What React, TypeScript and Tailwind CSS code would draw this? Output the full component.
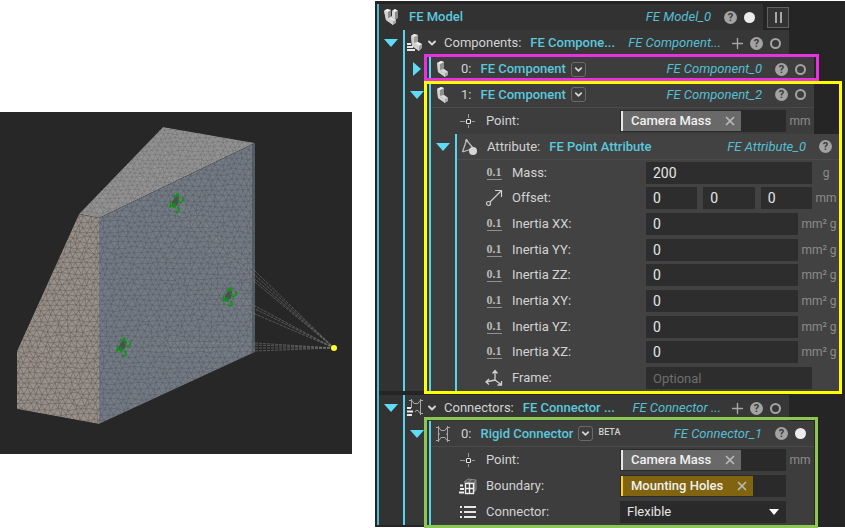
import type { ReactNode } from "react";
import { ChevronDown, Plus, X } from "lucide-react";

type Face = { id: string; points: string; fill: string; line: string; step: number; seed: number };

const faces: Face[] = [
  { id: "top", points: "163,15 255,31 99,106 79,102", fill: "#949494", line: "#767676", step: 5, seed: 3 },
  { id: "side", points: "79,102 99,106 99,312 17,297 17,239", fill: "#989089", line: "#68625c", step: 6, seed: 11 },
  { id: "front", points: "99,106 255,31 255,240 99,312", fill: "#747b84", line: "#596068", step: 6, seed: 29 },
];

const holes = [
  [176, 91],
  [229, 185],
  [123, 235],
];

// jittered triangle lattice, the same every time for a given seed
const meshPath = (step: number, seed: number) => {
  const noise = (i: number, j: number) => {
    const n = Math.sin(i * 127.1 + j * 311.7 + seed * 74.7) * 43758.5453;
    return n - Math.floor(n) - 0.5;
  };
  const at = (i: number, j: number) => {
    const x = (i + (j % 2) / 2) * step + noise(i, j) * step * 0.5;
    const y = j * step * 0.87 + noise(j + 50, i) * step * 0.5;
    return `${x.toFixed(1)} ${y.toFixed(1)}`;
  };
  let d = "";
  for (let j = 0; j < 320 / (step * 0.87); j++) {
    for (let i = 0; i < 260 / step; i++) {
      const k = j % 2;
      d += `M${at(i + 1, j)}L${at(i, j)}L${at(i + k, j + 1)}M${at(i, j)}L${at(i + k - 1, j + 1)}`;
    }
  }
  return d;
};

const Viewport = () => (
  <svg viewBox="0 0 352 342" className="block w-full bg-[#272727]" role="img" aria-label="Meshed bracket">
    <defs>
      {faces.map((f) => (
        <clipPath id={f.id} key={f.id}>
          <polygon points={f.points} />
        </clipPath>
      ))}
    </defs>
    {faces.map((f) => (
      <g key={f.id} clipPath={`url(#${f.id})`}>
        <polygon points={f.points} fill={f.fill} />
        <path d={meshPath(f.step, f.seed)} fill="none" stroke={f.line} strokeWidth="0.6" />
      </g>
    ))}
    <path d="M252 33L255 31V240L252 242Z" fill="#4a535d" opacity="0.7" />
    <g stroke="#a0a0a0" strokeWidth="0.5" strokeDasharray="3 1" opacity="0.8">
      <path d="M334 236L255 159M334 236L255 163M334 236L255 167M334 236L255 170" />
      <path d="M334 236L255 194M334 236L255 197M334 236L255 202" />
      <path d="M334 236L255 231M334 236L255 233M334 236L255 236M334 236L255 239" />
    </g>
    <g stroke="#a0a89c" strokeWidth="0.6" strokeDasharray="2 2" opacity="0.6">
      <path d="M255 159L180 88M255 163L180 94M255 169L176 99" />
      <path d="M255 194L234 184M255 202L230 192M255 232L128 230M255 238L126 238" />
    </g>
    {holes.map(([x, y]) => (
      <g key={x} transform={`translate(${x} ${y})`} fill="none">
        <ellipse cx="-1" cy="-1" rx="3" ry="6" fill="#4a504e" transform="rotate(25)" />
        <path
          d="M1 -10Q3 -7 1 -5M1 -8L-3 -6M2 -4Q3 1 6 -1Q9 -4 6 -6M-7 4L0 2M-5 -2L-6 5M-2 0V5M1 4Q4 5 3 8Q1 10 -2 8"
          stroke="#0a9614"
          strokeWidth="1.500"
        />
      </g>
    ))}
    <circle cx="334" cy="236" r="3" fill="#ffff2e" />
  </svg>
);

const BlockIcon = () => (
  <svg width="14" height="18" viewBox="0 0 14 18" aria-hidden="true">
    <path d="M1 3L5 1L8 2V9L12 12V15L9 17L2 12Z" fill="#a8a8a8" />
    <path d="M1 3L4 4V10L9 13V17L2 12Z" fill="#cfcfcf" />
    <path d="M4 4L8 2V9L4 10Z" fill="#8f8f8f" />
    <path d="M4 10L8 9L12 12L9 13Z" fill="#dadada" />
    <path d="M1 3L5 1L8 2L4 4Z" fill="#f2f2f2" />
  </svg>
);

const ModelIcon = () => (
  <svg width="16" height="18" viewBox="0 0 16 18" aria-hidden="true">
    <path d="M1 3L4 1L8 2V8L9 8V3L12 1L15 3V10L13 11V15L10 17L3 12Z" fill="#a5a5a5" />
    <path d="M1 3L5 4V10L10 13V17L3 12Z" fill="#d2d2d2" />
    <path d="M1 3L4 1L8 2L5 4ZM9 3L12 1L15 3L12 4Z" fill="#f6f6f6" />
    <path d="M9 3L12 4V11L9 9Z" fill="#d8d8d8" />
    <path d="M5 10L8 9L13 12L10 13Z" fill="#e8e8e8" />
    <path d="M8 2V9L5 10V4ZM15 3V10L12 11V4Z" fill="#8a8a8a" />
  </svg>
);

const BlockListIcon = () => (
  <svg width="17" height="18" viewBox="0 0 17 18" aria-hidden="true">
    <path d="M4 2L7 0L11 1V8L15 10V14L12 17L5 12Z" fill="#9c9c9c" />
    <path d="M4 2L7 3V9L12 12V17L5 12Z" fill="#cfcfcf" />
    <path d="M7 9L11 8L15 10L12 12ZM4 2L7 0L11 1L7 3Z" fill="#ececec" />
    <path d="M0 10H4M0 13H6M0 16H8" stroke="#e6e6e6" strokeWidth="2" />
  </svg>
);

const ConnectorIcon = () => (
  <svg width="14" height="16" viewBox="0 0 14 16" fill="none" stroke="#a8a8a8" aria-hidden="true">
    <path d="M2.500 0V16M11.500 0V16" />
    <path d="M0 1.500H3L5 4.500H9L11 1.500H14M0 14.500H3L5 11.500H9L11 14.500H14" />
    <path d="M2 8H4M10 8H12" />
  </svg>
);

const ConnectorListIcon = () => (
  <svg width="17" height="18" viewBox="0 0 17 18" fill="none" stroke="#a8a8a8" aria-hidden="true">
    <path d="M4.500 0V9M13.500 0V16" />
    <path d="M2 1.500H5L7 4.500H11L13 1.500H16M8 13L9 11.500H11L13 14.500H16" />
    <path d="M0 9H4M0 12.500H6M0 16H5" stroke="#e8e8e8" strokeWidth="2" />
  </svg>
);

const PointIcon = () => (
  <svg width="16" height="16" viewBox="0 0 16 16" fill="none" stroke="#b0b0b0" aria-hidden="true">
    <path d="M0 8.500H5M12 8.500H15M8.500 1V5M8.500 12V15" strokeWidth="0.800" />
    <rect x="6.500" y="6.500" width="4" height="4" rx="1" fill="#222" strokeWidth="1.200" stroke="#e8e8e8" />
  </svg>
);

const AttributeIcon = () => (
  <svg width="17" height="18" viewBox="0 0 17 18" fill="none" stroke="#bdbdbd" aria-hidden="true">
    <path d="M1.500 14L5.500 2L12 10M1.500 14L9 11.500" strokeWidth="1.300" />
    <circle cx="5.500" cy="2.500" r="1" />
    <circle cx="12" cy="13" r="4" fill="#d6d6d6" stroke="none" />
  </svg>
);

const NumberIcon = () => (
  <span
    aria-hidden="true"
    className="w-[15px] border-b border-[#909090] text-center font-['Liberation_Serif',serif] text-[12px] leading-[13px] font-bold text-[#b8b8b8]"
  >
    0.1
  </span>
);

const OffsetIcon = () => (
  <svg width="17" height="18" viewBox="0 0 17 18" fill="none" stroke="#cfcfcf" strokeWidth="1.200" aria-hidden="true">
    <circle cx="2.500" cy="14.500" r="2" />
    <path d="M4 13L15.500 1.500M9 1.500H15.500V8" />
  </svg>
);

const FrameIcon = () => (
  <svg width="18" height="18" viewBox="0 0 18 18" fill="none" stroke="#d0d0d0" strokeWidth="1.300" aria-hidden="true">
    <path d="M10 11V2M7.500 4.500L10 1.500L12.500 4.500M10 11L1 13M4 10L1 13L4 15.500M10 11L16 15.500M16.500 12V16H12.500" />
  </svg>
);

const BoundaryIcon = () => (
  <svg width="18" height="17" viewBox="0 0 18 17" aria-hidden="true">
    <path d="M5 4L9 1L17 2V12L14 15V5Z" fill="#555" stroke="#999" strokeWidth="0.800" />
    <path d="M9 4L13 1.500M15.500 3V13" stroke="#999" strokeWidth="0.800" />
    <rect x="6.500" y="5.500" width="8" height="10" fill="#3a3a3a" stroke="#eee" strokeWidth="1.400" />
    <path d="M10.500 5V16M6 10.500H15" stroke="#eee" strokeWidth="1.400" />
    <path d="M1 7.500H4M1 11H5M0 14.500H5" stroke="#eee" strokeWidth="2" />
  </svg>
);

const ListIcon = () => (
  <svg width="16" height="14" viewBox="0 0 16 14" stroke="#e6e6e6" strokeWidth="2" aria-hidden="true">
    <path d="M0 2H2M4 2H16M0 7H2M4 7H16M0 12H2M4 12H16" />
  </svg>
);

const Toggle = ({ open = true, label }: { open?: boolean; label: string }) => (
  <button aria-label={label} aria-expanded={open} className="flex h-[26px] w-6 items-center justify-center">
    {open ? (
      <svg width="14" height="8" viewBox="0 0 14 8" fill="#5fdcf5">
        <path d="M0 0H14L7 8Z" />
      </svg>
    ) : (
      <svg width="8" height="14" viewBox="0 0 8 14" fill="#5fdcf5">
        <path d="M0 0V14L8 7Z" />
      </svg>
    )}
  </button>
);

type HeaderProps = {
  icon: ReactNode;
  label?: string;
  name: string;
  id: string;
  list?: boolean;
  menu?: boolean;
  beta?: boolean;
  dot?: "full" | "ring";
  className?: string;
};

const Header = ({ icon, label, name, id, list, menu, beta, dot, className = "" }: HeaderProps) => (
  <div className={`flex h-[26px] items-center pr-2 whitespace-nowrap ${className}`}>
    {list ? (
      <>
        <span className="flex w-5 shrink-0 justify-center">{icon}</span>
        <ChevronDown size={12} strokeWidth={4} className="mr-[6px] ml-px shrink-0" aria-hidden="true" />
      </>
    ) : (
      <span className="mr-[6px] flex w-6 shrink-0 justify-center">{icon}</span>
    )}
    {label && <span className="mr-[9px]">{label}</span>}
    <span className="font-medium text-[#5ac8dd]">{name}</span>
    {menu && (
      <button
        aria-label={`${name} type`}
        className="ml-[5px] flex size-[15px] shrink-0 items-center justify-center rounded-[3px] border border-[#6a6a6a]"
      >
        <ChevronDown size={11} strokeWidth={4} />
      </button>
    )}
    {beta && <span className="mb-1 ml-[5px] text-[9px] font-medium">BETA</span>}
    <span className="ml-auto pl-2 text-[#55bfd3] italic">{id}</span>
    {list && (
      <button aria-label={`Add to ${id}`} className="ml-2 shrink-0 text-[#a5a5a5]">
        <Plus size={17} strokeWidth={2} />
      </button>
    )}
    <button
      aria-label={`Help for ${id}`}
      className={`flex size-[13px] shrink-0 items-center justify-center rounded-full bg-[#a3a3a3] text-[11px] leading-none font-bold text-[#3a3a3a] ${list ? "ml-1" : "ml-[13px]"}`}
    >
      ?
    </button>
    {dot && (
      <button
        aria-label={`Show ${id}`}
        className={`ml-[7px] size-[11px] shrink-0 rounded-full ${dot === "full" ? "bg-[#ececec]" : "border-2 border-[#a3a3a3]"}`}
      />
    )}
  </div>
);

type RowProps = {
  icon: ReactNode;
  label: string;
  htmlFor: string;
  unit?: ReactNode;
  wide?: boolean;
  children: ReactNode;
};

const Row = ({ icon, label, htmlFor, unit, wide, children }: RowProps) => (
  <div className="flex min-h-[25px] items-center">
    <label htmlFor={htmlFor} className="flex w-[189px] shrink-0 items-center pl-[25px]">
      <span className="mr-[6px] flex w-6 justify-center">{icon}</span>
      {label}
    </label>
    <div className="flex min-w-0 flex-1 gap-[6px]">{children}</div>
    <span className={`shrink-0 text-center text-[12px] whitespace-nowrap text-[#8c8c8c] ${wide ? "w-[42px]" : "w-7"}`}>
      {unit}
    </span>
  </div>
);

const Field = ({ id, value, label }: { id: string; value: string; label?: string }) => (
  <input
    id={id}
    aria-label={label}
    defaultValue={value}
    placeholder="Optional"
    className="h-[22px] w-full min-w-0 bg-[#2d2d2d] px-[7px] text-[14px] text-[#e6e6e6] outline-none placeholder:text-[13px] placeholder:text-[#6e6e6e]"
  />
);

const Chip = ({ id, text, gold }: { id: string; text: string; gold?: boolean }) => (
  <div className="flex h-[22px] w-full items-center bg-[#2a2a2a] pl-px">
    <span
      className={`flex h-5 shrink-0 items-center border-l-2 pr-1 pl-2 font-medium text-[#f0f0f0] ${gold ? "border-[#ffd02e] bg-[#80640f]" : "border-[#e8e8e8] bg-[#696969]"}`}
    >
      {text}
      <button aria-label={`Remove ${text}`} className="ml-3 text-[#b8b8b8]">
        <X size={14} strokeWidth={3} />
      </button>
    </span>
    <input id={id} className="w-full min-w-0 bg-transparent outline-none" />
  </div>
);

const Outline = ({ className }: { className: string }) => (
  <div className={`pointer-events-none absolute z-10 border-3 ${className}`} />
);

const inertias = ["XX", "YY", "ZZ", "XY", "YZ", "XZ"];

const Attribute = () => (
  <div className="flex bg-[#3d3d3d]">
    <Toggle label="Point attribute" />
    <section className="min-w-0 flex-1 border-l-2 border-[#5ad4ec] bg-[#424242]">
      <Header
        className="border-b border-[#4c4c4c]"
        icon={<AttributeIcon />}
        label="Attribute:"
        name="FE Point Attribute"
        id="FE Attribute_0"
      />
      <div className="grid h-[231px] auto-rows-fr">
        <Row icon={<NumberIcon />} label="Mass:" htmlFor="mass" unit="g">
          <Field id="mass" value="200" />
        </Row>
        <Row icon={<OffsetIcon />} label="Offset:" htmlFor="offset-x" unit="mm">
          <Field id="offset-x" value="0" />
          <Field id="offset-y" value="0" label="Offset Y" />
          <Field id="offset-z" value="0" label="Offset Z" />
        </Row>
        {inertias.map((axis) => (
          <Row
            key={axis}
            icon={<NumberIcon />}
            label={`Inertia ${axis}:`}
            htmlFor={`inertia-${axis}`}
            unit="mm² g"
            wide
          >
            <Field id={`inertia-${axis}`} value="0" />
          </Row>
        ))}
        <Row icon={<FrameIcon />} label="Frame:" htmlFor="frame">
          <Field id="frame" value="" />
        </Row>
      </div>
    </section>
  </div>
);

const Components = () => (
  <div className="flex">
    <div className="bg-[#323232]">
      <Toggle label="Components" />
    </div>
    <section className="min-w-0 flex-1 border-l-2 border-[#5ad4ec]">
      <Header
        className="mr-14 bg-[#373737]"
        list
        icon={<BlockListIcon />}
        label="Components:"
        name="FE Compone..."
        id="FE Component..."
        dot="ring"
      />
      <div className="relative flex">
        <div className="bg-[#373737]">
          <Toggle open={false} label="Component 0" />
        </div>
        <section className="mr-[31px] min-w-0 flex-1 border-l-2 border-[#5ad4ec] bg-[#3d3d3d]">
          <Header icon={<BlockIcon />} label="0:" name="FE Component" id="FE Component_0" menu dot="ring" />
        </section>
        <Outline className="-top-[2px] right-[26px] bottom-px left-[19px] border-[#e832e0]" />
      </div>
      <div className="relative flex">
        <div className="bg-[#373737]">
          <Toggle label="Component 1" />
        </div>
        <section className="min-w-0 flex-1 border-l-2 border-[#5ad4ec]">
          <div className="mr-[31px] bg-[#3d3d3d]">
            <Header
              className="border-b border-[#4a4a4a]"
              icon={<BlockIcon />}
              label="1:"
              name="FE Component"
              id="FE Component_2"
              menu
              dot="ring"
            />
            <div className="grid h-[26px]">
              <Row icon={<PointIcon />} label="Point:" htmlFor="point" unit="mm">
                <Chip id="point" text="Camera Mass" />
              </Row>
            </div>
          </div>
          <div className="mr-[5px]">
            <Attribute />
          </div>
        </section>
        <Outline className="-top-px right-[3px] -bottom-[3px] left-[19px] border-[#ffff00]" />
      </div>
    </section>
  </div>
);

const Connectors = () => (
  <div className="flex">
    <div className="bg-[#323232]">
      <Toggle label="Connectors" />
    </div>
    <section className="min-w-0 flex-1 border-l-2 border-[#5ad4ec]">
      <Header
        className="mr-14 bg-[#373737]"
        list
        icon={<ConnectorListIcon />}
        label="Connectors:"
        name="FE Connector ..."
        id="FE Connector ..."
        dot="ring"
      />
      <div className="relative flex">
        <div className="bg-[#373737]">
          <Toggle label="Connector 0" />
        </div>
        <section className="mr-[31px] min-w-0 flex-1 border-l-2 border-[#5ad4ec] bg-[#3d3d3d]">
          <Header
            className="border-b border-[#4a4a4a]"
            icon={<ConnectorIcon />}
            label="0:"
            name="Rigid Connector"
            id="FE Connector_1"
            menu
            beta
            dot="full"
          />
          <div className="grid auto-rows-[26px]">
            <Row icon={<PointIcon />} label="Point:" htmlFor="connector-point" unit="mm">
              <Chip id="connector-point" text="Camera Mass" />
            </Row>
            <Row icon={<BoundaryIcon />} label="Boundary:" htmlFor="boundary">
              <Chip id="boundary" text="Mounting Holes" gold />
            </Row>
            <Row icon={<ListIcon />} label="Connector:" htmlFor="connector">
              <div className="relative w-full">
                <select id="connector" className="block h-[22px] w-full appearance-none bg-[#2a2a2a] pl-[7px] text-[#e6e6e6]">
                  <option>Flexible</option>
                  <option>Rigid</option>
                </select>
                <svg width="10" height="6" viewBox="0 0 10 6" className="pointer-events-none absolute top-2 right-[7px]" fill="#fff">
                  <path d="M0 0H10L5 6Z" />
                </svg>
              </div>
            </Row>
          </div>
        </section>
        <Outline className="-top-1 right-[27px] -bottom-[3px] left-[19px] border-[#8cc751]" />
      </div>
    </section>
  </div>
);

const App = () => (
  <main className="flex min-h-screen items-start gap-[23px] bg-white">
    <div className="mt-28 w-[352px] shrink-0">
      <Viewport />
    </div>
    <div className="mt-px min-w-0 flex-1 bg-[#252525] pt-[3px] pb-[2px] pl-[2px] font-['Roboto',sans-serif] text-[13px] leading-[18px] text-[#d2d2d2]">
      <section className="border-l-2 border-[#4fb9cd]">
        <div className="flex">
          <Header
            className="min-w-0 flex-1 bg-[#323232]"
            icon={<ModelIcon />}
            name="FE Model"
            id="FE Model_0"
            dot="full"
          />
          <button
            aria-label="Pause"
            className="mt-[3px] mr-14 ml-1 flex h-[21px] w-[22px] items-center justify-center gap-[3px] border border-[#626262] bg-[#333333]"
          >
            <span className="h-[11px] w-[2px] bg-[#a8a8a8]" />
            <span className="h-[11px] w-[2px] bg-[#a8a8a8]" />
          </button>
        </div>
        <div className="flex flex-col gap-1">
          <Components />
          <Connectors />
        </div>
      </section>
    </div>
  </main>
);

export default App;
